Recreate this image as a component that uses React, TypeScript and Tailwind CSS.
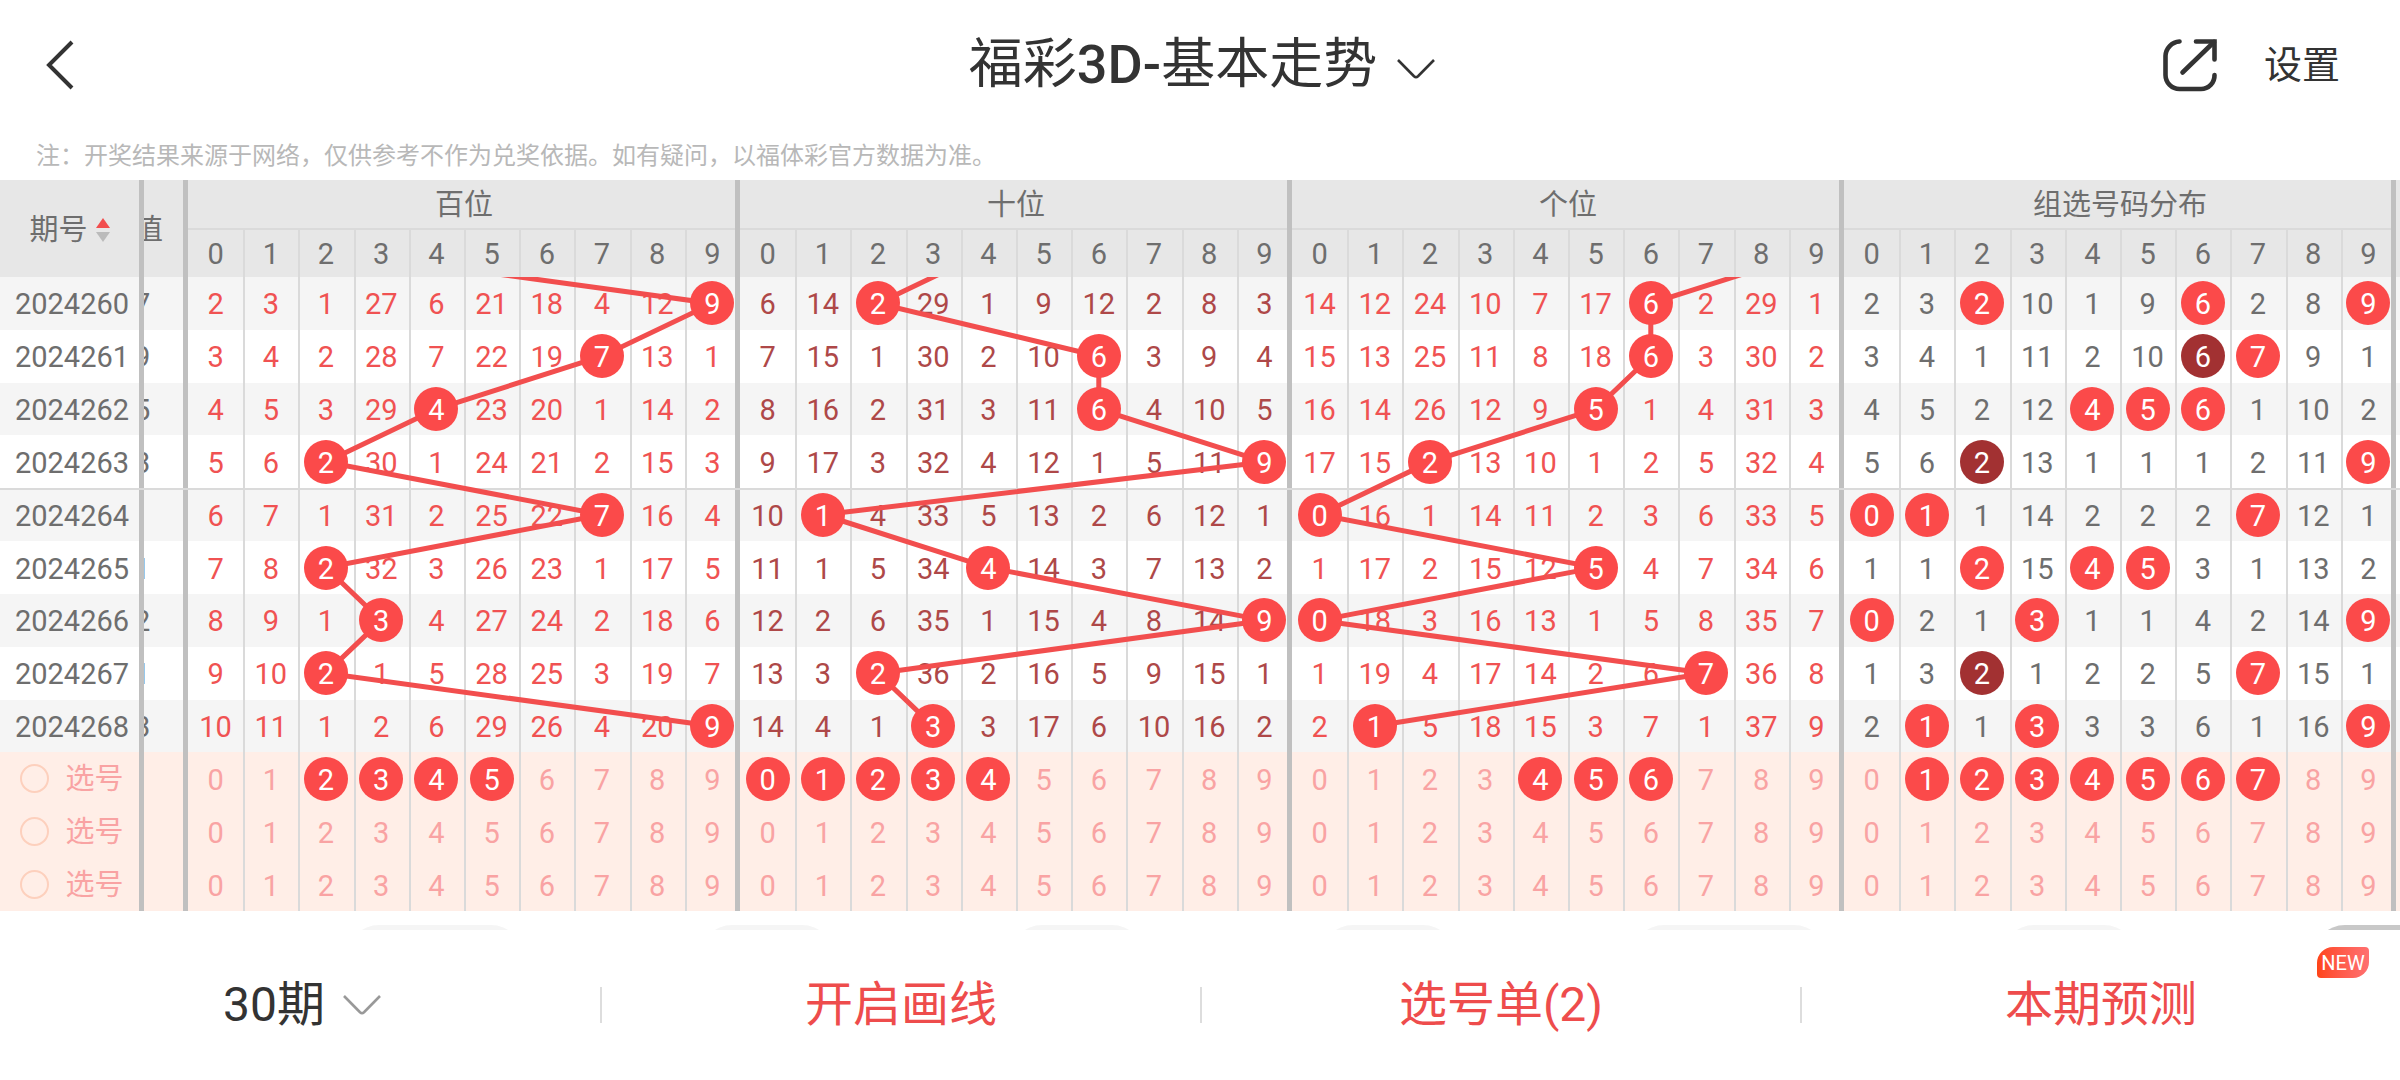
import React, { useState } from 'react'
import clsx from 'clsx'

type Tone = 'red' | 'maroon' | 'gray'

interface Draw {
  issue: string
  sum: number
  digits: [number, number, number]
  miss: [string, string, string, string]
}

// Each miss string lists the ten cells of one group, from 0 to 9
const DRAWS: Draw[] = [
  { issue: '2024260', sum: 17, digits: [9, 2, 6], miss: ['2 3 1 27 6 21 18 4 12 9', '6 14 2 29 1 9 12 2 8 3', '14 12 24 10 7 17 6 2 29 1', '2 3 2 10 1 9 6 2 8 9'] },
  { issue: '2024261', sum: 19, digits: [7, 6, 6], miss: ['3 4 2 28 7 22 19 7 13 1', '7 15 1 30 2 10 6 3 9 4', '15 13 25 11 8 18 6 3 30 2', '3 4 1 11 2 10 6 7 9 1'] },
  { issue: '2024262', sum: 15, digits: [4, 6, 5], miss: ['4 5 3 29 4 23 20 1 14 2', '8 16 2 31 3 11 6 4 10 5', '16 14 26 12 9 5 1 4 31 3', '4 5 2 12 4 5 6 1 10 2'] },
  { issue: '2024263', sum: 13, digits: [2, 9, 2], miss: ['5 6 2 30 1 24 21 2 15 3', '9 17 3 32 4 12 1 5 11 9', '17 15 2 13 10 1 2 5 32 4', '5 6 2 13 1 1 1 2 11 9'] },
  { issue: '2024264', sum: 8, digits: [7, 1, 0], miss: ['6 7 1 31 2 25 22 7 16 4', '10 1 4 33 5 13 2 6 12 1', '0 16 1 14 11 2 3 6 33 5', '0 1 1 14 2 2 2 7 12 1'] },
  { issue: '2024265', sum: 11, digits: [2, 4, 5], miss: ['7 8 2 32 3 26 23 1 17 5', '11 1 5 34 4 14 3 7 13 2', '1 17 2 15 12 5 4 7 34 6', '1 1 2 15 4 5 3 1 13 2'] },
  { issue: '2024266', sum: 12, digits: [3, 9, 0], miss: ['8 9 1 3 4 27 24 2 18 6', '12 2 6 35 1 15 4 8 14 9', '0 18 3 16 13 1 5 8 35 7', '0 2 1 3 1 1 4 2 14 9'] },
  { issue: '2024267', sum: 11, digits: [2, 2, 7], miss: ['9 10 2 1 5 28 25 3 19 7', '13 3 2 36 2 16 5 9 15 1', '1 19 4 17 14 2 6 7 36 8', '1 3 2 1 2 2 5 7 15 1'] },
  { issue: '2024268', sum: 13, digits: [9, 3, 1], miss: ['10 11 1 2 6 29 26 4 20 9', '14 4 1 3 3 17 6 10 16 2', '2 1 5 18 15 3 7 1 37 9', '2 1 1 3 3 3 6 1 16 9'] },
]

// `before` is the digit of the draw just above the first visible row
const GROUPS: { title: string; tone: Tone; before?: number }[] = [
  { title: '百位', tone: 'red', before: 2 },
  { title: '十位', tone: 'maroon', before: 4 },
  { title: '个位', tone: 'red', before: 9 },
  { title: '组选号码分布', tone: 'gray' },
]

const TONES: Record<Tone, string> = {
  red: 'text-[#f05252]',
  maroon: 'text-[#ae4848]',
  gray: 'text-[#6e6e6e]',
}

const PICKED: number[][] = [
  [2, 3, 4, 5],
  [0, 1, 2, 3, 4],
  [4, 5, 6],
  [1, 2, 3, 4, 5, 6, 7],
]

const DIGITS = [0, 1, 2, 3, 4, 5, 6, 7, 8, 9]
const ROW_COUNT = DRAWS.length + 3

const ROW = 'grid grid-cols-[144px_44px_repeat(40,minmax(0,1fr))_4px]'
const CELL = 'flex items-center justify-center'
const TEXT_CELL = 'flex items-center justify-center pt-[2px]'
const SCROLLED_CELL = 'flex items-center justify-end overflow-hidden pt-[2px]'
const THICK = 'shadow-[inset_-5px_0_#c0c0c0]'
const THIN = 'shadow-[inset_2px_0_#dadada]'
const THICK_THIN = 'shadow-[inset_-5px_0_#c0c0c0,inset_2px_0_#dadada]'

const line = (d: number) => (d === 9 ? THICK_THIN : d > 0 ? THIN : '')

function Ball({ n, dark }: { n: number | string; dark?: boolean }) {
  return (
    <span
      className={clsx(
        'relative z-10 flex size-11 shrink-0 items-center justify-center rounded-full pt-[2px] text-white',
        dark ? 'bg-[#a23132]' : 'bg-[#fb4a4a]',
      )}
    >
      {n}
    </span>
  )
}

function Chevron({ className }: { className?: string }) {
  return (
    <svg viewBox="0 0 38 20" fill="none" stroke="currentColor" className={clsx('h-5 w-[38px] shrink-0', className)}>
      <path d="M1 1 L17 17.2 Q19 19 21 17.2 L37 1" strokeWidth="2.6" />
    </svg>
  )
}

function TrendLine({ group }: { group: number }) {
  const points = [
    [GROUPS[group].before! * 10 + 5, -5],
    ...DRAWS.map((d, i) => [d.digits[group] * 10 + 5, i * 10 + 5]),
  ]
  return (
    <svg
      viewBox={`0 0 100 ${ROW_COUNT * 10}`}
      preserveAspectRatio="none"
      fill="none"
      className="h-full min-w-0 flex-1 overflow-hidden"
    >
      <polyline
        points={points.map((p) => p.join(',')).join(' ')}
        stroke="#f24e4e"
        strokeWidth="5"
        vectorEffect="non-scaling-stroke"
      />
    </svg>
  )
}

function TableHead() {
  return (
    <thead className="grid grid-cols-[144px_44px_repeat(40,minmax(0,1fr))_4px] grid-rows-[48px_49px] bg-[#e7e7e7] text-[#6e6e6e]">
      <tr className="contents">
        <th className={clsx(TEXT_CELL, THICK, 'row-span-2 pr-[5px] font-normal')}>
          <button className="flex items-center gap-2">
            期号
            <svg viewBox="0 0 14 24" className="h-6 w-[14px]">
              <path d="M7 0 L14 10 H0 Z" fill="#f24e4e" />
              <path d="M0 14 H14 L7 24 Z" fill="#bbb" />
            </svg>
          </button>
        </th>
        <th className={clsx(SCROLLED_CELL, THICK, 'row-span-2 font-normal')}>
          <span className="w-[108px] shrink-0 text-center">和值</span>
        </th>
        {GROUPS.map((g) => (
          <th key={g.title} className={clsx(TEXT_CELL, THICK, 'col-span-10 font-normal')}>
            {g.title}
          </th>
        ))}
        <th className="row-span-2" />
      </tr>
      <tr className="contents">
        {GROUPS.map((g) =>
          DIGITS.map((d) => (
            <th
              key={g.title + d}
              className={clsx(
                TEXT_CELL,
                'relative font-normal before:absolute before:top-0 before:left-0 before:h-[2px] before:bg-[#dadada]',
                d === 9 ? 'before:right-[5px]' : 'before:right-0',
                line(d),
              )}
            >
              {d}
            </th>
          )),
        )}
      </tr>
    </thead>
  )
}

function DrawRow({ draw, index }: { draw: Draw; index: number }) {
  return (
    <tr
      className={clsx(
        ROW,
        index % 2 === 0 ? 'bg-[#f5f5f5]' : 'bg-white',
        index === 4 && 'relative after:absolute after:inset-x-0 after:top-0 after:h-[2px] after:bg-[#dadada]',
      )}
    >
      <td className={clsx(TEXT_CELL, THICK, TONES.gray)}>{draw.issue}</td>
      <td className={clsx(SCROLLED_CELL, THICK, TONES.gray)}>
        <span className="w-[108px] shrink-0 text-center">{draw.sum}</span>
      </td>
      {GROUPS.map((g, gi) =>
        draw.miss[gi].split(' ').map((value, d) => {
          const hits = draw.digits.filter((n) => n === d).length
          const hit = gi < 3 ? draw.digits[gi] === d : hits > 0
          return (
            <td key={g.title + d} className={clsx(hit ? CELL : TEXT_CELL, line(d), TONES[g.tone])}>
              {hit ? <Ball n={value} dark={gi === 3 && hits > 1} /> : value}
            </td>
          )
        }),
      )}
      <td />
    </tr>
  )
}

interface PickRowProps {
  row: number
  picked: number[][]
  onToggle: (group: number, digit: number) => void
}

function PickRow({ row, picked, onToggle }: PickRowProps) {
  return (
    <tr className={clsx(ROW, 'bg-[#ffeee7] text-[#f9a3a3]')}>
      <td className={clsx(CELL, THICK)}>
        <label className="flex items-center gap-4">
          <input
            type="radio"
            name="pick"
            value={row}
            className="size-[29px] appearance-none rounded-full border-2 border-[#fdd0bd] checked:bg-[#fdd0bd]"
          />
          选号
        </label>
      </td>
      <td className={THICK} />
      {GROUPS.map((g, gi) =>
        DIGITS.map((d) => {
          const on = picked[gi].includes(d)
          return (
            <td key={g.title + d} className={clsx('flex', line(d))}>
              <button className={clsx(on ? CELL : TEXT_CELL, 'w-full')} onClick={() => onToggle(gi, d)}>
                {on ? <Ball n={d} /> : d}
              </button>
            </td>
          )
        }),
      )}
      <td />
    </tr>
  )
}

export default function App() {
  const [picks, setPicks] = useState<number[][][]>([PICKED, [[], [], [], []], [[], [], [], []]])

  const toggle = (row: number, group: number, d: number) => {
    setPicks((all) =>
      all.map((p, r) =>
        r !== row ? p : p.map((g, i) => (i !== group ? g : g.includes(d) ? g.filter((n) => n !== d) : [...g, d])),
      ),
    )
  }

  return (
    <div className="w-full overflow-hidden bg-white font-[Roboto,'Noto_Sans_CJK_SC',sans-serif] text-[#333]">
      <header className="grid h-[130px] grid-cols-[1fr_auto_1fr] items-center px-11">
        <button aria-label="返回" className="justify-self-start">
          <svg viewBox="0 0 32 50" fill="none" stroke="currentColor" strokeWidth="4" className="h-[50px] w-8">
            <path d="M28 2 L5 25 L28 48" />
          </svg>
        </button>
        <button aria-haspopup="menu" className="flex items-center gap-5 pl-1 text-[54px] leading-[72px]">
          <span>
            福彩<span className="font-medium">3D-</span>基本走势
          </span>
          <Chevron className="mt-2" />
        </button>
        <div className="flex items-center gap-[46px] justify-self-end pr-4">
          <button aria-label="分享">
            <svg
              viewBox="0 0 56 56"
              fill="none"
              stroke="currentColor"
              strokeWidth="4.6"
              strokeLinecap="round"
              className="size-14"
            >
              <path d="M17.5 4.5 A15 15 0 0 0 3.5 19 V38 A14 14 0 0 0 17.5 52 H39 A13.5 13.5 0 0 0 52.5 38" />
              <path d="M34 4.5 H52.5 V22.5" />
              <path d="M52 5 L20.5 35.5" />
            </svg>
          </button>
          <button className="text-[38px] leading-[48px]">设置</button>
        </div>
      </header>

      <p className="h-[50px] px-9 text-2xl leading-[52px] text-[#b8b8b8]">
        注：开奖结果来源于网络，仅供参考不作为兑奖依据。如有疑问，以福体彩官方数据为准。
      </p>

      <table className="block w-full text-[29px] leading-9">
        <TableHead />
        <tbody className="relative grid h-[634px] grid-rows-12">
          {DRAWS.map((draw, i) => (
            <DrawRow key={draw.issue} draw={draw} index={i} />
          ))}
          {picks.map((picked, i) => (
            <PickRow key={i} row={i} picked={picked} onToggle={(g, d) => toggle(i, g, d)} />
          ))}
          <tr className="pointer-events-none absolute inset-0 flex pr-1 pl-[188px]">
            {[0, 1, 2].map((g) => (
              <td key={g} className="flex min-w-0 flex-1">
                <TrendLine group={g} />
              </td>
            ))}
            <td className="flex-1" />
          </tr>
        </tbody>
      </table>

      <div className="flex h-[19px] items-start justify-between overflow-hidden pt-[14px] pl-[347px]">
        <span className="h-16 w-[176px] rounded-full bg-[#f5f5f5]" />
        <span className="h-16 w-[134px] rounded-full bg-[#f5f5f5]" />
        <span className="h-16 w-[134px] rounded-full bg-[#f5f5f5]" />
        <span className="h-16 w-[134px] rounded-full bg-[#f5f5f5]" />
        <span className="h-16 w-[194px] rounded-full bg-[#f5f5f5]" />
        <span className="h-16 w-[134px] rounded-full bg-[#f5f5f5]" />
        <span className="h-16 w-[87px] rounded-l-full bg-[#c8c8c8]" />
      </div>

      <nav className="grid h-[150px] grid-cols-4 items-center text-5xl">
        <label className="flex h-9 items-center justify-center gap-[18px] pl-1">
          <select aria-label="期数" className="field-sizing-content appearance-none leading-[64px]">
            <option>30期</option>
          </select>
          <Chevron className="text-[#999]" />
        </label>
        <button className="h-9 border-l-2 border-[#ddd] leading-9 text-[#ee4c4c]">开启画线</button>
        <button className="h-9 border-l-2 border-[#ddd] leading-9 text-[#ee4c4c]">选号单(2)</button>
        <button className="relative h-9 border-l-2 border-[#ddd] leading-9 text-[#ee4c4c]">
          本期预测
          <span className="absolute -top-10 right-[31px] flex h-[31px] w-[52px] items-center justify-center rounded-tl-2xl rounded-tr rounded-br-2xl rounded-bl bg-linear-to-r from-[#ff4416] to-[#ff7070] text-xl text-white">
            NEW
          </span>
        </button>
      </nav>
    </div>
  )
}
